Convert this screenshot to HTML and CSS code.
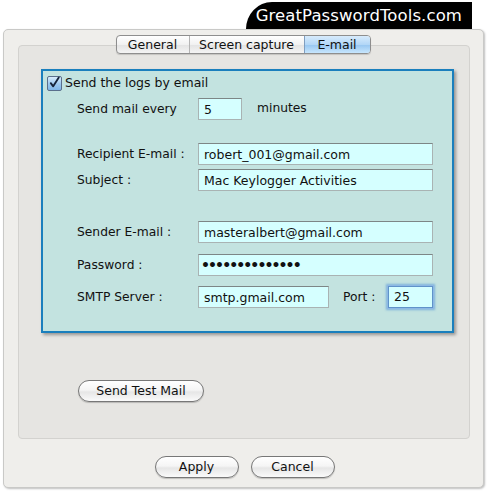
FILE: index.html
```html
<!DOCTYPE html>
<html>
<head>
<meta charset="utf-8">
<link rel="stylesheet" href="styles.css">
</head>
<body>
<div class="brand-row"><div class="brand">GreatPasswordTools.com</div></div>
<div class="window">
  <div class="group">
    <div class="tabs">
      <div class="tab tab-general">General</div>
      <div class="tab tab-screen">Screen capture</div>
      <div class="tab tab-email active">E-mail</div>
    </div>
    <div class="panel">
      <div class="check-row">
        <span class="checkbox"><svg width="14" height="14" viewBox="0 0 14 14"><path d="M3 7.2 L5.6 10.6 L11.6 1.2" fill="none" stroke="#16243a" stroke-width="2" stroke-linecap="round" stroke-linejoin="round"/></svg></span>
        <span class="check-label">Send the logs by email</span>
      </div>
      <div class="row row-every">
        <span class="label">Send mail every</span>
        <span class="field field-small">5</span>
        <span class="unit">minutes</span>
      </div>
      <div class="row row-recipient">
        <span class="label">Recipient E-mail :</span>
        <span class="field field-wide">robert_001@gmail.com</span>
      </div>
      <div class="row row-subject">
        <span class="label">Subject :</span>
        <span class="field field-wide">Mac Keylogger Activities</span>
      </div>
      <div class="row row-sender">
        <span class="label">Sender E-mail :</span>
        <span class="field field-wide">masteralbert@gmail.com</span>
      </div>
      <div class="row row-password">
        <span class="label">Password :</span>
        <span class="field field-wide dots">••••••••••••••</span>
      </div>
      <div class="row row-smtp">
        <span class="label">SMTP Server :</span>
        <span class="field field-smtp">smtp.gmail.com</span>
        <span class="port-label">Port :</span>
        <span class="field field-port">25</span>
      </div>
    </div>
    <div class="test-row"><button class="btn btn-test">Send Test Mail</button></div>
  </div>
  <div class="actions">
    <button class="btn btn-action">Apply</button>
    <button class="btn btn-action">Cancel</button>
  </div>
</div>
</body>
</html>
```
FILE: styles.css
```css
* { box-sizing: border-box; }
html, body { margin: 0; padding: 0; background: #ffffff; }
body {
  width: 488px; height: 492px; overflow: hidden;
  font-family: "DejaVu Sans", "Liberation Sans", sans-serif;
  font-size: 12px; color: #111;
}
.brand-row { display: flex; justify-content: flex-end; padding: 2px 16px 0 0; }
.brand {
  width: 226px; height: 27px;
  background: #000;
  border-top-left-radius: 26px 27px;
  color: #fff;
  font-size: 16.5px;
  display: flex; align-items: center; justify-content: flex-end;
  padding: 0 10px 1px 0;
  letter-spacing: 0.1px;
}
.window {
  margin: 0 4px 0 3px;
  height: 459px;
  background: #efeeeb;
  border: 1px solid #c9c9c7;
  border-radius: 5px;
  box-shadow: 1px 1px 2px rgba(0,0,0,0.25);
  padding: 15px 13px 0 14px;
  display: flex; flex-direction: column;
}
.group {
  height: 394px;
  background: #e6e5e2;
  border: 1px solid #d3d2cf;
  border-radius: 4px;
  display: flex; flex-direction: column;
}
.tabs {
  align-self: center;
  margin-top: -11px;
  margin-left: -2px;
  display: flex;
  height: 19px;
  border: 1px solid #8e8e8e;
  border-radius: 4px;
  overflow: hidden;
  background: linear-gradient(#ffffff, #f1f1f1 50%, #e3e3e3 52%, #f4f4f4);
  box-shadow: 0 1px 1px rgba(0,0,0,0.15);
}
.tab {
  display: flex; align-items: center; justify-content: center;
  font-size: 12.5px; color: #111;
  border-left: 1px solid #b4b4b4;
  padding-bottom: 1px;
}
.tab:first-child { border-left: none; }
.tab-general { width: 72px; }
.tab-screen { width: 115px; }
.tab-email { width: 66px; }
.tab.active {
  background: linear-gradient(#d7ebfc, #b3d7f7 50%, #97c6f1 52%, #c7e6fd);
  border-left-color: #7f9ec0;
}
.panel {
  margin: 15px 15px 0 22px;
  height: 264px;
  background: #c3e3e0;
  border: 2px solid #1a7fbd;
  box-shadow: 2px 2px 3px rgba(0,0,0,0.35);
  padding: 5px 0 0 4px;
}
.check-row { display: flex; align-items: center; height: 14px; }
.checkbox {
  width: 15px; height: 15px;
  border: 1px solid #5a6f8c;
  border-radius: 2px;
  background: linear-gradient(#d8ecfc, #9cc8ee 55%, #7fb6e8);
  display: flex; align-items: flex-end; justify-content: center;
  margin-top: 1px;
}
.checkbox svg { margin-top: -2px; }
.check-label { margin-left: 3px; font-size: 12.5px; padding-bottom: 1px; }
.row { display: flex; align-items: center; padding-left: 30px; }
.label { width: 121px; flex: none; font-size: 12.3px; }
.field {
  height: 22px;
  background: #d5ffff;
  border: 1px solid #a9b3b3;
  border-top-color: #7d8686;
  display: flex; align-items: center;
  padding: 1px 0 0 5px;
  font-size: 12.5px; color: #111;
  white-space: nowrap;
}
.field-small { width: 44px; }
.field-wide { width: 235px; }
.field-smtp { width: 131px; }
.field-port {
  width: 45px;
  border: 1px solid #5f93c9;
  box-shadow: 0 0 0 1px #8db8e4, 0 0 2px 2px rgba(80,145,215,0.6);
  align-items: flex-start; padding-top: 2px;
}
.unit { margin-left: 15px; padding-bottom: 2px; font-size: 12.3px; }
.port-label { margin-left: 14px; width: 45px; font-size: 12.3px; }
.dots { font-size: 14px; letter-spacing: -1.9px; padding: 0 0 1px 2px; font-weight: bold; }
.row-every { margin-top: 8px; }
.row-recipient { margin-top: 23px; }
.row-subject { margin-top: 4px; }
.row-sender { margin-top: 30px; }
.row-password { margin-top: 11px; }
.row-smtp { margin-top: 10px; }
.test-row { margin-top: 47px; padding-left: 59px; }
.btn {
  font-family: "DejaVu Sans", "Liberation Sans", sans-serif;
  font-size: 12.5px; color: #111;
  height: 22px;
  border: 1px solid #777;
  border-radius: 11px;
  background: linear-gradient(#ffffff, #f5f5f5 45%, #e6e6e6 55%, #fafafa);
  box-shadow: 0 1px 1px rgba(0,0,0,0.2);
  padding: 0 0 1px 0;
  display: inline-flex; align-items: center; justify-content: center;
}
.btn-test { width: 126px; }
.actions { display: flex; justify-content: center; gap: 12px; margin-top: 17px; margin-left: 1px; }
.btn-action { width: 84px; }
```
